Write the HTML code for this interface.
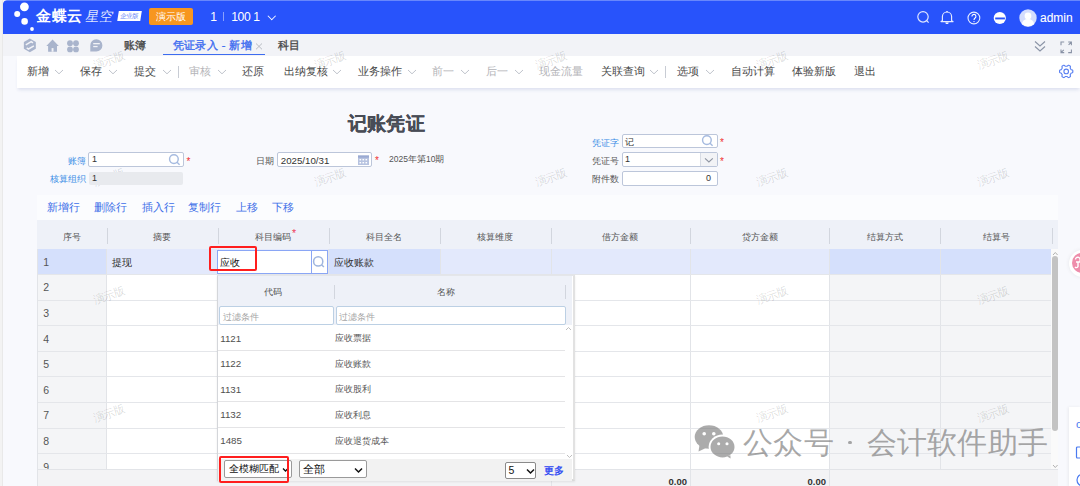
<!DOCTYPE html>
<html><head><meta charset="utf-8">
<style>
*{box-sizing:border-box;margin:0;padding:0}
html,body{width:1080px;height:486px;overflow:hidden;background:#f8f9fd;font-family:"Liberation Sans",sans-serif;color:#333}
.a{position:absolute;white-space:nowrap}
#top{position:absolute;left:0;top:0;width:1080px;height:33.5px;background:#2853fb}
#tabs{position:absolute;left:0;top:33.5px;width:1080px;height:22px;background:#f2f3f7}
#tool{position:absolute;left:16.7px;top:55.8px;width:1063.3px;height:32px;background:#fff;box-shadow:0 3px 3px -1px rgba(190,198,225,.45)}
.tb{font-size:11px;color:#4a4a4a;top:63.5px}
.tb.g{color:#b4b4b8}
.chev{position:absolute}
.sep{position:absolute;width:1px;height:12px;background:#c8ccd4;top:66px}
.lbl{font-size:9px;color:#555}
.blue{color:#3a8ee6}
.inp{position:absolute;background:#fff;border:1px solid #bcc6da;border-radius:2px}
.star{color:#f03030;font-size:10px}
.lnk{font-size:11.4px;color:#3d6fe8;top:200px}
#tbl{position:absolute;left:37.4px;top:220.2px;width:1020.6px;height:265.8px;overflow:hidden}
.hd{position:absolute;left:0;top:0;width:1020.6px;height:28.7px;background:#eef1f8}
.ht{font-size:9px;color:#555;text-align:center}
.hs{position:absolute;top:8px;width:1px;height:15.5px;background:#d4d8e0}
.row{position:absolute;left:0;width:1020.6px;height:25.6px;border-bottom:1px solid #e4e6ea}
.cell{position:absolute;top:0;height:100%}
.wm{font-size:11.3px;color:rgba(0,0,0,.15);transform:rotate(-18deg);width:36px;text-align:center;line-height:14px}
.dig{font-size:10.5px;color:#555}
</style></head><body>
<div class="a" style="left:0;top:0;width:2.5px;height:486px;background:#f3f3f3;border-right:1px solid #e9e9e9;z-index:50"></div>
<svg class="a" style="left:2.5px;top:0;z-index:50" width="5" height="5"><path d="M0 0 H5 A4.5 4.5 0 0 0 0 5Z" fill="#f3f3f3"/></svg>
<div class="a" style="left:0;top:0;width:1080px;height:1px;background:rgba(255,255,255,.3);z-index:49"></div>
<!-- top bar -->
<div id="top">
  <svg class="a" style="left:0;top:0" width="40" height="34">
    <circle cx="24.4" cy="6.8" r="4.4" fill="#fff"/>
    <circle cx="17.2" cy="14" r="3" fill="#fff"/>
    <circle cx="24.6" cy="21.4" r="3.3" fill="#fff"/>
    <circle cx="32" cy="29" r="1.9" fill="#fff"/>
  </svg>
  <div class="a" style="left:36px;top:7px;font-size:15px;font-weight:bold;color:#fff;letter-spacing:0.5px">金蝶云</div>
  <div class="a" style="left:83.5px;top:8px;font-size:13.5px;color:rgba(255,255,255,.88);transform:skewX(-10deg);transform-origin:0 100%;letter-spacing:0">星空</div>
  <div class="a" style="left:117.8px;top:11.2px;width:22.6px;height:10.4px;background:#fff;transform:skewX(-9deg);color:#5f82f8;font-size:6.3px;line-height:10.4px;text-align:center">企业版</div>
  <div class="a" style="left:149px;top:7.6px;width:43.8px;height:17.7px;background:#f7961f;border-radius:2px;color:#fff;font-size:10px;line-height:17.7px;text-align:center">演示版</div>
  <div class="a" style="left:210.3px;top:9.5px;font-size:12.2px;color:#fff">1</div>
  <div class="a" style="left:223px;top:12px;width:1px;height:9px;background:rgba(255,255,255,.45)"></div>
  <div class="a" style="left:231.3px;top:9.5px;font-size:12.2px;letter-spacing:-0.45px;color:#fff">100 1</div>
  <div class="a" style="left:269px;top:13px;width:5.5px;height:5.5px;border-right:1.2px solid #fff;border-bottom:1.2px solid #fff;transform:rotate(45deg)"></div>
  <!-- right icons -->
  <svg class="a" style="left:915px;top:9px" width="18" height="18"><circle cx="8" cy="7.85" r="5.2" fill="none" stroke="#dfe6ff" stroke-width="1.2"/><line x1="11.7" y1="11.6" x2="13.6" y2="13.6" stroke="#dfe6ff" stroke-width="1.3"/></svg>
  <svg class="a" style="left:939px;top:10px" width="16" height="16"><path d="M3.4 10.7 V6.6 a4.6 4.6 0 0 1 9.2 0 V10.7 L14 11.6 H2 Z" fill="none" stroke="#e6ecff" stroke-width="1.15" stroke-linejoin="round"/><path d="M6.3 12.6 h3.4 a1.7 1.5 0 0 1 -3.4 0z" fill="#fff"/><line x1="8" y1="0.9" x2="8" y2="2.2" stroke="#fff" stroke-width="1.2"/></svg>
  <svg class="a" style="left:966px;top:10px" width="16" height="16"><circle cx="7.9" cy="8" r="5.9" fill="none" stroke="#e6ecff" stroke-width="1.1"/><path d="M5.9 6.4 a2 2 0 1 1 3.2 1.6 c-0.8 0.6 -1.1 0.9 -1.1 1.9" fill="none" stroke="#fff" stroke-width="1.1"/><circle cx="8" cy="11.6" r="0.7" fill="#fff"/></svg>
  <svg class="a" style="left:992px;top:10px" width="16" height="16"><circle cx="7.8" cy="8" r="6.1" fill="#fff"/><rect x="3.2" y="7.5" width="9.7" height="1.9" fill="#2853fb"/></svg>
  <svg class="a" style="left:1019px;top:8.5px" width="18" height="18"><circle cx="9" cy="9" r="8.7" fill="#d4ddfd"/><circle cx="9" cy="7" r="3.4" fill="#fff"/><path d="M3 15 a6 5 0 0 1 12 0 a8.7 8.7 0 0 1 -12 0z" fill="#fff"/></svg>
  <div class="a" style="left:1040px;top:10.5px;font-size:12px;color:#fff;-webkit-text-stroke:0.1px #fff">admin</div>
</div>
<!-- tabs bar -->
<div id="tabs">
  <svg class="a" style="left:22px;top:3px" width="90" height="18">
<path d="M7.85 1.45 L13.83 4.90 L13.83 11.80 L7.85 15.25 L1.87 11.80 L1.87 4.90Z" fill="#a9b4cc"/>
<path d="M3.80 7.80 L9.20 4.70 L11.00 5.90 M4.70 10.80 L6.50 12.00 L11.90 8.90" stroke="#f2f3f7" stroke-width="1.5" fill="none"/>
<path d="M24.30 9.10 L30.55 2.50 L36.80 9.10 H35.00 V14.70 H26.10 V9.10Z" fill="#a9b4cc"/>
<rect x="29.6" y="11.100000000000001" width="1.9" height="3.6" fill="#f2f3f7"/>
<circle cx="48" cy="6.200000000000003" r="2.9" fill="#a9b4cc"/><circle cx="54" cy="6.200000000000003" r="2.9" fill="#a9b4cc"/>
<circle cx="48" cy="12.399999999999999" r="2.9" fill="#a9b4cc"/><circle cx="54" cy="12.399999999999999" r="2.9" fill="#a9b4cc"/>
<path d="M74.30 2.30 A6.1 6.1 0 1 1 74.30 14.50 H68.30 V8.40 A6 6 0 0 1 74.30 2.30Z" fill="#a9b4cc"/>
<rect x="71.2" y="6.0" width="6.6" height="1.3" fill="#f2f3f7"/><rect x="71.2" y="8.899999999999999" width="4.4" height="1.3" fill="#f2f3f7"/>
</svg>
  <div class="a" style="left:123.5px;top:4.5px;font-size:11px;color:#484848;-webkit-text-stroke:0.35px #484848">账簿</div>
  <div class="a" style="left:172.5px;top:4.5px;font-size:11px;color:#3d6cf0;letter-spacing:0.45px;-webkit-text-stroke:0.35px #3d6cf0">凭证录入 - 新增</div>
  <svg class="a" style="left:255px;top:9.5px" width="8" height="7"><path d="M1 0.5 L7 6.3 M7 0.5 L1 6.3" stroke="#b8bcc4" stroke-width="1"/></svg>
  <div class="a" style="left:162.8px;top:20.3px;width:101.8px;height:1.7px;background:#3d6cf0"></div>
  <div class="a" style="left:277.5px;top:4.5px;font-size:11px;color:#484848;-webkit-text-stroke:0.35px #484848">科目</div>
  <svg class="a" style="left:1033px;top:6px" width="14" height="14"><path d="M2 1.5 L7 6 L12 1.5 M2 6.5 L7 11 L12 6.5" stroke="#8a93a6" stroke-width="1.1" fill="none"/></svg>
  <svg class="a" style="left:1059px;top:6.5px" width="15" height="15"><path d="M2 5.2 V2 H5.2 M9.2 2 H12.4 V5.2 M12.4 2 L9.6 4.8 M2 9.4 V12.6 H5.2 M2 12.6 L4.8 9.8 M12.4 9.4 V12.6 H9.2" stroke="#8a93a6" stroke-width="1.1" fill="none"/></svg>
</div>
<!-- toolbar -->
<div id="tool"></div>
<div class="a tb" style="left:26.7px">新增</div><svg class="chev" style="left:54.0px;top:68.5px" width="10" height="6"><path d="M1 1 L5 4.8 L9 1" fill="none" stroke="#c0c4cc" stroke-width="1"/></svg>
<div class="a tb" style="left:80px">保存</div><svg class="chev" style="left:108.0px;top:68.5px" width="10" height="6"><path d="M1 1 L5 4.8 L9 1" fill="none" stroke="#c0c4cc" stroke-width="1"/></svg>
<div class="a tb" style="left:134px">提交</div><svg class="chev" style="left:162.0px;top:68.5px" width="10" height="6"><path d="M1 1 L5 4.8 L9 1" fill="none" stroke="#c0c4cc" stroke-width="1"/></svg>
<div class="sep" style="left:178px"></div>
<div class="a tb g" style="left:189px">审核</div><svg class="chev" style="left:216.5px;top:68.5px" width="10" height="6"><path d="M1 1 L5 4.8 L9 1" fill="none" stroke="#c0c4cc" stroke-width="1"/></svg>
<div class="a tb" style="left:242px">还原</div>
<div class="a tb" style="left:284px">出纳复核</div><svg class="chev" style="left:332.0px;top:68.5px" width="10" height="6"><path d="M1 1 L5 4.8 L9 1" fill="none" stroke="#c0c4cc" stroke-width="1"/></svg>
<div class="a tb" style="left:358px">业务操作</div><svg class="chev" style="left:406.5px;top:68.5px" width="10" height="6"><path d="M1 1 L5 4.8 L9 1" fill="none" stroke="#c0c4cc" stroke-width="1"/></svg>
<div class="a tb g" style="left:431.7px">前一</div><svg class="chev" style="left:460.0px;top:68.5px" width="10" height="6"><path d="M1 1 L5 4.8 L9 1" fill="none" stroke="#c0c4cc" stroke-width="1"/></svg>
<div class="a tb g" style="left:485.7px">后一</div><svg class="chev" style="left:514.0px;top:68.5px" width="10" height="6"><path d="M1 1 L5 4.8 L9 1" fill="none" stroke="#c0c4cc" stroke-width="1"/></svg>
<div class="a tb g" style="left:539px">现金流量</div>
<div class="a tb" style="left:600.7px">关联查询</div><svg class="chev" style="left:649.0px;top:68.5px" width="10" height="6"><path d="M1 1 L5 4.8 L9 1" fill="none" stroke="#c0c4cc" stroke-width="1"/></svg>
<div class="sep" style="left:665px"></div>
<div class="a tb" style="left:676.7px">选项</div><svg class="chev" style="left:705.0px;top:68.5px" width="10" height="6"><path d="M1 1 L5 4.8 L9 1" fill="none" stroke="#c0c4cc" stroke-width="1"/></svg>
<div class="a tb" style="left:731px">自动计算</div>
<div class="a tb" style="left:792.3px">体验新版</div>
<div class="a tb" style="left:854px">退出</div>
<svg class="a" style="left:1058px;top:63px" width="17" height="17"><path d="M12.66 10.97 L12.59 11.09 L12.52 11.20 L12.44 11.32 L12.37 11.43 L12.29 11.54 L12.20 11.64 L12.22 11.83 L12.27 12.07 L12.33 12.32 L12.37 12.57 L12.41 12.83 L12.43 13.09 L12.43 13.35 L12.38 13.57 L12.25 13.68 L12.11 13.78 L11.97 13.88 L11.82 13.98 L11.67 14.07 L11.53 14.16 L11.37 14.24 L11.22 14.33 L11.06 14.40 L10.90 14.48 L10.74 14.54 L10.58 14.61 L10.37 14.54 L10.15 14.41 L9.94 14.26 L9.73 14.10 L9.53 13.93 L9.34 13.76 L9.16 13.60 L9.01 13.49 L8.87 13.51 L8.74 13.52 L8.60 13.53 L8.47 13.54 L8.33 13.55 L8.20 13.55 L8.07 13.55 L7.93 13.54 L7.80 13.53 L7.66 13.52 L7.53 13.51 L7.39 13.49 L7.24 13.60 L7.06 13.76 L6.87 13.93 L6.67 14.10 L6.46 14.26 L6.25 14.41 L6.03 14.54 L5.82 14.61 L5.66 14.54 L5.50 14.48 L5.34 14.40 L5.18 14.33 L5.03 14.24 L4.88 14.16 L4.73 14.07 L4.58 13.98 L4.43 13.88 L4.29 13.78 L4.15 13.68 L4.02 13.57 L3.97 13.35 L3.97 13.09 L3.99 12.83 L4.03 12.57 L4.07 12.32 L4.13 12.07 L4.18 11.83 L4.20 11.64 L4.11 11.54 L4.03 11.43 L3.96 11.32 L3.88 11.20 L3.81 11.09 L3.74 10.98 L3.67 10.86 L3.61 10.74 L3.55 10.62 L3.50 10.49 L3.44 10.37 L3.39 10.25 L3.22 10.16 L2.99 10.09 L2.75 10.02 L2.50 9.93 L2.26 9.83 L2.02 9.71 L1.80 9.59 L1.63 9.44 L1.61 9.27 L1.59 9.10 L1.57 8.92 L1.56 8.75 L1.55 8.57 L1.55 8.40 L1.55 8.23 L1.56 8.05 L1.57 7.88 L1.59 7.70 L1.61 7.53 L1.63 7.36 L1.80 7.21 L2.02 7.09 L2.26 6.97 L2.50 6.87 L2.75 6.78 L2.99 6.71 L3.22 6.64 L3.39 6.55 L3.44 6.43 L3.50 6.31 L3.55 6.18 L3.61 6.06 L3.67 5.94 L3.74 5.83 L3.81 5.71 L3.88 5.60 L3.96 5.48 L4.03 5.37 L4.11 5.26 L4.20 5.16 L4.18 4.97 L4.13 4.73 L4.07 4.48 L4.03 4.23 L3.99 3.97 L3.97 3.71 L3.97 3.45 L4.02 3.23 L4.15 3.12 L4.29 3.02 L4.43 2.92 L4.58 2.82 L4.73 2.73 L4.87 2.64 L5.03 2.56 L5.18 2.47 L5.34 2.40 L5.50 2.32 L5.66 2.26 L5.82 2.19 L6.03 2.26 L6.25 2.39 L6.46 2.54 L6.67 2.70 L6.87 2.87 L7.06 3.04 L7.24 3.20 L7.39 3.31 L7.53 3.29 L7.66 3.28 L7.80 3.27 L7.93 3.26 L8.07 3.25 L8.20 3.25 L8.33 3.25 L8.47 3.26 L8.60 3.27 L8.74 3.28 L8.87 3.29 L9.01 3.31 L9.16 3.20 L9.34 3.04 L9.53 2.87 L9.73 2.70 L9.94 2.54 L10.15 2.39 L10.37 2.26 L10.58 2.19 L10.74 2.26 L10.90 2.32 L11.06 2.40 L11.22 2.47 L11.37 2.56 L11.53 2.64 L11.67 2.73 L11.82 2.82 L11.97 2.92 L12.11 3.02 L12.25 3.12 L12.38 3.23 L12.43 3.45 L12.43 3.71 L12.41 3.97 L12.37 4.23 L12.33 4.48 L12.27 4.73 L12.22 4.97 L12.20 5.16 L12.29 5.26 L12.37 5.37 L12.44 5.48 L12.52 5.60 L12.59 5.71 L12.66 5.83 L12.73 5.94 L12.79 6.06 L12.85 6.18 L12.90 6.31 L12.96 6.43 L13.01 6.55 L13.18 6.64 L13.41 6.71 L13.65 6.78 L13.90 6.87 L14.14 6.97 L14.38 7.09 L14.60 7.21 L14.77 7.36 L14.79 7.53 L14.81 7.70 L14.83 7.88 L14.84 8.05 L14.85 8.23 L14.85 8.40 L14.85 8.57 L14.84 8.75 L14.83 8.92 L14.81 9.10 L14.79 9.27 L14.77 9.44 L14.60 9.59 L14.38 9.71 L14.14 9.83 L13.90 9.93 L13.65 10.02 L13.41 10.09 L13.18 10.16 L13.01 10.25 L12.96 10.37 L12.90 10.49 L12.85 10.62 L12.79 10.74 L12.73 10.86 L12.66 10.97Z" fill="none" stroke="#5a80f2" stroke-width="1.1" stroke-linejoin="round"/><circle cx="8.2" cy="8.4" r="2.3" fill="none" stroke="#5a80f2" stroke-width="1.1"/></svg>

<div style="position:absolute;left:0;top:0;width:0;height:0;z-index:1"><!-- content -->
<div class="a" style="left:348.3px;top:111px;font-size:19px;letter-spacing:0.1px;font-weight:bold;color:#484c56;-webkit-text-stroke:0.2px #484c56">记账凭证</div>
<div class="a lbl blue" style="left:67.5px;top:154.5px">账簿</div>
<div class="inp" style="left:88.1px;top:152.1px;width:95.6px;height:15.4px"></div>
<div class="a" style="left:92px;top:154px;font-size:9px;color:#333">1</div>
<svg class="a" style="left:167px;top:153px" width="15" height="14"><circle cx="6.9" cy="6.1" r="4.35" fill="none" stroke="#a6bbe0" stroke-width="1.45"/><line x1="10" y1="9.3" x2="12.6" y2="11.7" stroke="#a6bbe0" stroke-width="1.5"/></svg>
<div class="a star" style="left:186.5px;top:155.5px">*</div>
<div class="a lbl blue" style="left:49.5px;top:173px">核算组织</div>
<div class="a" style="left:89.2px;top:171.7px;width:93.8px;height:13.6px;background:#e8eaee;border-radius:2px"></div>
<div class="a" style="left:92px;top:172.5px;font-size:9px;color:#333">1</div>

<div class="a lbl" style="left:256px;top:155px">日期</div>
<div class="inp" style="left:277.2px;top:152.2px;width:95.3px;height:15.2px"></div>
<div class="a" style="left:280.8px;top:155px;font-size:9.7px;color:#333">2025/10/31</div>
<svg class="a" style="left:357px;top:154px" width="13" height="12"><rect x="1" y="1.5" width="11" height="9.5" fill="#b7c3e0"/><rect x="1" y="1.5" width="11" height="2.2" fill="#9aaad2"/><g fill="#fff"><rect x="2.5" y="5" width="1.6" height="1.4"/><rect x="5.5" y="5" width="1.6" height="1.4"/><rect x="8.5" y="5" width="1.6" height="1.4"/><rect x="2.5" y="8" width="1.6" height="1.4"/><rect x="5.5" y="8" width="1.6" height="1.4"/><rect x="8.5" y="8" width="1.6" height="1.4"/></g></svg>
<div class="a star" style="left:375px;top:155.0px">*</div>
<div class="a" style="left:389px;top:154px;font-size:8.5px;color:#555">2025年第10期</div>

<div class="a lbl blue" style="left:591.5px;top:136.5px">凭证字</div>
<div class="inp" style="left:622.2px;top:134.3px;width:95.9px;height:14.2px"></div>
<div class="a" style="left:625px;top:135.5px;font-size:9px;color:#333">记</div>
<svg class="a" style="left:700px;top:134px" width="15" height="14"><circle cx="6.9" cy="6.1" r="4.35" fill="none" stroke="#a6bbe0" stroke-width="1.45"/><line x1="10" y1="9.3" x2="12.6" y2="11.7" stroke="#a6bbe0" stroke-width="1.5"/></svg>
<div class="a star" style="left:720px;top:137.0px">*</div>
<div class="a lbl" style="left:591.5px;top:155px">凭证号</div>
<div class="inp" style="left:622.2px;top:152.4px;width:95.9px;height:15px"></div>
<div class="a" style="left:700.2px;top:153.4px;width:16.9px;height:13px;background:#f2f3f6;border-left:1px solid #d8dce4"></div>
<svg class="a" style="left:704.3px;top:157px" width="10" height="7"><path d="M1 1.3 L4.9 5 L8.8 1.3" fill="none" stroke="#8e95a2" stroke-width="1.1"/></svg>
<div class="a" style="left:625px;top:154px;font-size:9px;color:#333">1</div>
<div class="a star" style="left:720px;top:155.5px">*</div>
<div class="a lbl" style="left:591.5px;top:173px">附件数</div>
<div class="inp" style="left:622.2px;top:171px;width:95.9px;height:14.6px"></div>
<div class="a" style="left:706px;top:172.5px;font-size:9px;color:#333">0</div>

</div>
<div class="a" style="left:37.4px;top:195px;width:1020.3px;height:25.2px;background:#fbfcfe"></div>
<div class="a lnk" style="left:47.3px">新增行</div>
<div class="a lnk" style="left:94px">删除行</div>
<div class="a lnk" style="left:141.7px">插入行</div>
<div class="a lnk" style="left:188.3px">复制行</div>
<div class="a lnk" style="left:236px">上移</div>
<div class="a lnk" style="left:271.7px">下移</div>
<div class="a" style="left:37.4px;top:220.2px;width:1020.3px;height:28.7px;background:#eef1f8"></div>
<div class="a ht" style="left:37.4px;width:69.1px;top:230.5px">序号</div>
<div class="a ht" style="left:106.5px;width:111.19999999999999px;top:230.5px">摘要</div>
<div class="a ht" style="left:217.7px;width:110.80000000000001px;top:230.5px">科目编码</div><div class="a" style="left:292px;top:226.5px;font-size:10.5px;color:#f0405a">*</div>
<div class="a ht" style="left:328.5px;width:111.5px;top:230.5px">科目全名</div>
<div class="a ht" style="left:440px;width:110.79999999999995px;top:230.5px">核算维度</div>
<div class="a ht" style="left:550.8px;width:139.20000000000005px;top:230.5px">借方金额</div>
<div class="a ht" style="left:690px;width:139px;top:230.5px">贷方金额</div>
<div class="a ht" style="left:829px;width:111px;top:230.5px">结算方式</div>
<div class="a ht" style="left:940px;width:112px;top:230.5px">结算号</div>
<div class="a" style="left:106.5px;top:228.3px;width:1px;height:15.4px;background:#d2d6de"></div>
<div class="a" style="left:217.7px;top:228.3px;width:1px;height:15.4px;background:#d2d6de"></div>
<div class="a" style="left:328.5px;top:228.3px;width:1px;height:15.4px;background:#d2d6de"></div>
<div class="a" style="left:440px;top:228.3px;width:1px;height:15.4px;background:#d2d6de"></div>
<div class="a" style="left:550.8px;top:228.3px;width:1px;height:15.4px;background:#d2d6de"></div>
<div class="a" style="left:690px;top:228.3px;width:1px;height:15.4px;background:#d2d6de"></div>
<div class="a" style="left:829px;top:228.3px;width:1px;height:15.4px;background:#d2d6de"></div>
<div class="a" style="left:940px;top:228.3px;width:1px;height:15.4px;background:#d2d6de"></div>
<div class="a" style="left:1052px;top:228.3px;width:1px;height:15.4px;background:#d2d6de"></div>
<div class="a" style="left:37.4px;top:248.9px;width:1014px;height:220.29999999999998px;overflow:hidden">
<div class="a" style="left:0.0px;top:0;width:69.1px;height:25.6px;background:#d5e0fc"></div>
<div class="a" style="left:0.0px;top:25.6px;width:69.1px;height:300px;background:#f4f5f7"></div>
<div class="a" style="left:69.1px;top:0;width:111.19999999999999px;height:25.6px;background:#e3e9fc"></div>
<div class="a" style="left:69.1px;top:25.6px;width:111.19999999999999px;height:300px;background:#ffffff"></div>
<div class="a" style="left:180.29999999999998px;top:0;width:110.80000000000004px;height:25.6px;background:#e3e9fc"></div>
<div class="a" style="left:180.29999999999998px;top:25.6px;width:110.80000000000004px;height:300px;background:#ffffff"></div>
<div class="a" style="left:291.1px;top:0;width:111.5px;height:25.6px;background:#d5e0fc"></div>
<div class="a" style="left:291.1px;top:25.6px;width:111.5px;height:300px;background:#f4f5f7"></div>
<div class="a" style="left:402.6px;top:0;width:110.79999999999995px;height:25.6px;background:#e3e9fc"></div>
<div class="a" style="left:402.6px;top:25.6px;width:110.79999999999995px;height:300px;background:#ffffff"></div>
<div class="a" style="left:513.4px;top:0;width:139.20000000000005px;height:25.6px;background:#e3e9fc"></div>
<div class="a" style="left:513.4px;top:25.6px;width:139.20000000000005px;height:300px;background:#ffffff"></div>
<div class="a" style="left:652.6px;top:0;width:139.0px;height:25.6px;background:#e3e9fc"></div>
<div class="a" style="left:652.6px;top:25.6px;width:139.0px;height:300px;background:#ffffff"></div>
<div class="a" style="left:791.6px;top:0;width:111.0px;height:25.6px;background:#d5e0fc"></div>
<div class="a" style="left:791.6px;top:25.6px;width:111.0px;height:300px;background:#f4f5f7"></div>
<div class="a" style="left:902.6px;top:0;width:112.0px;height:25.6px;background:#d5e0fc"></div>
<div class="a" style="left:902.6px;top:25.6px;width:112.0px;height:300px;background:#f4f5f7"></div>
<div class="a" style="left:69.1px;top:0;width:1px;height:300px;background:#e2e4e8"></div>
<div class="a" style="left:180.29999999999998px;top:0;width:1px;height:300px;background:#e2e4e8"></div>
<div class="a" style="left:291.1px;top:0;width:1px;height:300px;background:#e2e4e8"></div>
<div class="a" style="left:402.6px;top:0;width:1px;height:300px;background:#e2e4e8"></div>
<div class="a" style="left:513.4px;top:0;width:1px;height:300px;background:#e2e4e8"></div>
<div class="a" style="left:652.6px;top:0;width:1px;height:300px;background:#e2e4e8"></div>
<div class="a" style="left:791.6px;top:0;width:1px;height:300px;background:#e2e4e8"></div>
<div class="a" style="left:902.6px;top:0;width:1px;height:300px;background:#e2e4e8"></div>
<div class="a" style="left:0;top:25.1px;width:1014px;height:1px;background:#e4e6ea"></div>
<div class="a" style="left:0;top:50.7px;width:1014px;height:1px;background:#e4e6ea"></div>
<div class="a" style="left:0;top:76.30000000000001px;width:1014px;height:1px;background:#e4e6ea"></div>
<div class="a" style="left:0;top:101.9px;width:1014px;height:1px;background:#e4e6ea"></div>
<div class="a" style="left:0;top:127.5px;width:1014px;height:1px;background:#e4e6ea"></div>
<div class="a" style="left:0;top:153.10000000000002px;width:1014px;height:1px;background:#e4e6ea"></div>
<div class="a" style="left:0;top:178.70000000000002px;width:1014px;height:1px;background:#e4e6ea"></div>
<div class="a" style="left:0;top:204.3px;width:1014px;height:1px;background:#e4e6ea"></div>
<div class="a" style="left:0;top:229.9px;width:1014px;height:1px;background:#e4e6ea"></div>
<div class="a dig" style="left:5.8px;top:7.0px">1</div>
<div class="a dig" style="left:5.8px;top:32.6px">2</div>
<div class="a dig" style="left:5.8px;top:58.2px">3</div>
<div class="a dig" style="left:5.8px;top:83.80000000000001px">4</div>
<div class="a dig" style="left:5.8px;top:109.4px">5</div>
<div class="a dig" style="left:5.8px;top:135.0px">6</div>
<div class="a dig" style="left:5.8px;top:160.60000000000002px">7</div>
<div class="a dig" style="left:5.8px;top:186.20000000000002px">8</div>
<div class="a dig" style="left:5.8px;top:211.8px">9</div>
<div class="a" style="left:74.30000000000001px;top:7px;font-size:10px;color:#333">提现</div>
<div class="a" style="left:296.3px;top:7px;font-size:10px;color:#333">应收账款</div>
</div>
<div class="a" style="left:37.4px;top:469.2px;width:1020.3px;height:17px;background:#f3f3f5;border-top:1px solid #e2e4e8"></div>
<div class="a" style="left:550.8px;top:469.2px;width:1px;height:17px;background:#e2e4e8"></div>
<div class="a" style="left:690px;top:469.2px;width:1px;height:17px;background:#e2e4e8"></div>
<div class="a" style="left:829px;top:469.2px;width:1px;height:17px;background:#e2e4e8"></div>
<div class="a" style="left:668.5px;top:476px;font-size:9.5px;font-weight:bold;color:#333">0.00</div>
<div class="a" style="left:807.5px;top:476px;font-size:9.5px;font-weight:bold;color:#333">0.00</div>
<div class="a" style="left:1051px;top:248.9px;width:7px;height:220.3px;background:#fafafa"></div><svg class="a" style="left:1051.5px;top:250.5px" width="7" height="5"><path d="M1 4 L3.3 1.5 L5.6 4" fill="none" stroke="#a8a8a8" stroke-width="0.9"/></svg><svg class="a" style="left:1051.5px;top:463.5px" width="7" height="5"><path d="M1 1 L3.3 3.5 L5.6 1" fill="none" stroke="#a8a8a8" stroke-width="0.9"/></svg>
<div class="a" style="left:1051.6px;top:256px;width:6.2px;height:175px;background:#c3c3c3;border-radius:3px"></div>
<div class="a" style="left:217.2px;top:250.1px;width:111.1px;height:23.6px;background:#fff;border:1px solid #8aa6f5"></div>
<div class="a" style="left:310.6px;top:250.1px;width:1px;height:23.6px;background:#8aa6f5"></div>
<svg class="a" style="left:312px;top:255px" width="14" height="14"><circle cx="6.2" cy="6.4" r="4.6" fill="none" stroke="#9fb5de" stroke-width="1.5"/><line x1="9.5" y1="9.7" x2="11.9" y2="12" stroke="#9fb5de" stroke-width="1.5"/></svg>
<div class="a" style="left:219.8px;top:256px;font-size:10px;color:#222">应收</div>
<div class="a" style="left:37.4px;top:248.9px;width:1px;height:238px;background:#e2e4e8"></div>
<div class="a wm" style="left:91px;top:53px">演示版</div>
<div class="a wm" style="left:312px;top:53px">演示版</div>
<div class="a wm" style="left:533px;top:53px">演示版</div>
<div class="a wm" style="left:754px;top:53px">演示版</div>
<div class="a wm" style="left:975px;top:53px">演示版</div>
<div class="a wm" style="left:91px;top:170px">演示版</div>
<div class="a wm" style="left:312px;top:170px">演示版</div>
<div class="a wm" style="left:533px;top:170px">演示版</div>
<div class="a wm" style="left:754px;top:170px">演示版</div>
<div class="a wm" style="left:975px;top:170px">演示版</div>
<div class="a wm" style="left:91px;top:288px">演示版</div>
<div class="a wm" style="left:312px;top:288px">演示版</div>
<div class="a wm" style="left:533px;top:288px">演示版</div>
<div class="a wm" style="left:754px;top:288px">演示版</div>
<div class="a wm" style="left:975px;top:288px">演示版</div>
<div class="a wm" style="left:91px;top:406px">演示版</div>
<div class="a wm" style="left:312px;top:406px">演示版</div>
<div class="a wm" style="left:533px;top:406px">演示版</div>
<div class="a wm" style="left:754px;top:406px">演示版</div>
<div class="a wm" style="left:975px;top:406px">演示版</div>
<div class="a" style="left:217.2px;top:274.6px;width:357.4px;height:206.8px;background:#fff;border-left:1px solid #d4d6da;border-top:1px solid #e4e6ea;border-right:2px solid #e2e2e2;border-bottom:2px solid #dadada;box-shadow:0 1px 2px rgba(0,0,0,.08)"></div>
<div class="a" style="left:218.2px;top:275.5px;width:354.2px;height:49.2px;background:#eef1f8"></div>
<div class="a ht" style="left:263.5px;top:286px">代码</div>
<div class="a ht" style="left:437px;top:286px">名称</div>
<div class="a" style="left:334.4px;top:284.5px;width:1px;height:14px;background:#d2d6de"></div>
<div class="a" style="left:565.3px;top:284.5px;width:1px;height:14px;background:#d2d6de"></div>
<div class="a" style="left:219.3px;top:306px;width:115.1px;height:18.6px;background:#fff;border:1px solid #bcd0e4;border-radius:2px"></div>
<div class="a" style="left:335.5px;top:306px;width:230px;height:18.6px;background:#fff;border:1px solid #bcd0e4;border-radius:2px"></div>
<div class="a" style="left:222.8px;top:311px;font-size:9px;color:#a4a4a4">过滤条件</div>
<div class="a" style="left:338.8px;top:311px;font-size:9px;color:#a4a4a4">过滤条件</div>
<div class="a" style="left:220.2px;top:332.6px;font-size:9.8px;color:#505050">1121</div>
<div class="a" style="left:335px;top:332.1px;font-size:9px;color:#555">应收票据</div>
<div class="a" style="left:218.2px;top:350.20000000000005px;width:346.5px;height:1px;background:#e4e4e6"></div>
<div class="a" style="left:220.2px;top:358.2px;font-size:9.8px;color:#505050">1122</div>
<div class="a" style="left:335px;top:357.70000000000005px;font-size:9px;color:#555">应收账款</div>
<div class="a" style="left:218.2px;top:375.80000000000007px;width:346.5px;height:1px;background:#e4e4e6"></div>
<div class="a" style="left:220.2px;top:383.8px;font-size:9.8px;color:#505050">1131</div>
<div class="a" style="left:335px;top:383.3px;font-size:9px;color:#555">应收股利</div>
<div class="a" style="left:218.2px;top:401.40000000000003px;width:346.5px;height:1px;background:#e4e4e6"></div>
<div class="a" style="left:220.2px;top:409.4px;font-size:9.8px;color:#505050">1132</div>
<div class="a" style="left:335px;top:408.90000000000003px;font-size:9px;color:#555">应收利息</div>
<div class="a" style="left:218.2px;top:427.00000000000006px;width:346.5px;height:1px;background:#e4e4e6"></div>
<div class="a" style="left:220.2px;top:435.0px;font-size:9.8px;color:#505050">1485</div>
<div class="a" style="left:335px;top:434.5px;font-size:9px;color:#555">应收退货成本</div>
<div class="a" style="left:218.2px;top:452.6px;width:346.5px;height:1px;background:#e4e4e6"></div>
<svg class="a" style="left:565px;top:326px" width="7" height="5"><path d="M1 4 L3.5 1.5 L6 4" fill="none" stroke="#b8b8b8" stroke-width="0.9"/></svg>
<svg class="a" style="left:565.5px;top:454px" width="7" height="5"><path d="M1 1 L3.5 3.5 L6 1" fill="none" stroke="#b8b8b8" stroke-width="0.9"/></svg>
<div class="a" style="left:218.2px;top:459.2px;width:353.6px;height:22px;background:#f2f2f2"></div>
<div class="a" style="left:224.2px;top:460px;width:67.9px;height:17.9px;background:#fff;border:1px solid #9a9a9a;border-radius:2px"></div>
<div class="a" style="left:228.6px;top:463px;font-size:9.8px;color:#111">全模糊匹配</div>
<svg class="a" style="left:282px;top:466.5px" width="7" height="6"><path d="M1 1.5 L3.5 4 L6 1.5" fill="none" stroke="#111" stroke-width="1.3"/></svg>
<div class="a" style="left:299px;top:460px;width:67.7px;height:17.9px;background:#fff;border:1px solid #9a9a9a;border-radius:2px"></div>
<div class="a" style="left:302.5px;top:462.5px;font-size:10.5px;color:#111">全部</div>
<svg class="a" style="left:354px;top:466.5px" width="9" height="7"><path d="M1 1.5 L4.5 5 L8 1.5" fill="none" stroke="#111" stroke-width="1.5"/></svg>
<div class="a" style="left:505.3px;top:462.2px;width:30.6px;height:16.4px;background:#fff;border:1px solid #8a8a8a;border-radius:2px"></div>
<div class="a" style="left:508.5px;top:463.5px;font-size:10.5px;color:#111">5</div>
<svg class="a" style="left:525.5px;top:467.5px" width="9" height="7"><path d="M1 1.5 L4.5 5 L8 1.5" fill="none" stroke="#111" stroke-width="1.5"/></svg>
<div class="a" style="left:543.5px;top:463.5px;font-size:10px;color:#1f3ef2;-webkit-text-stroke:0.3px #1f3ef2">更多</div>
<div class="a" style="left:208.8px;top:246.2px;width:48.2px;height:24.7px;border:2px solid #ff1e1e;border-radius:2px"></div>
<div class="a" style="left:219px;top:455.6px;width:69.7px;height:27.4px;border:2px solid #ff1e1e;border-radius:2px"></div>
<div class="a" style="left:1068.8px;top:406.7px;width:12px;height:80px;background:#fff;box-shadow:-1px 0 3px rgba(0,0,0,.06)"></div>
<div class="a" style="left:1068.6px;top:249.6px;width:27px;height:27px;border-radius:50%;background:#fff;box-shadow:0 0 4px rgba(0,0,0,.08)"></div><svg class="a" style="left:1068px;top:248px" width="12" height="30"><circle cx="14" cy="14.9" r="10" fill="#ee8dab"/><path d="M7.5 11.5 a2.3 2.3 0 1 1 4.6 0 v2 M8 14 h4.1 M10 14 v4.5 a1.8 1.8 0 0 1 -3 0.5" stroke="#fff" stroke-width="1.4" fill="none"/></svg>
<div class="a" style="left:1076px;top:418px;font-size:11px;color:#4a7af0">c</div>
<svg class="a" style="left:1075px;top:446px" width="6" height="14"><rect x="1.5" y="1" width="7" height="11" rx="1" fill="none" stroke="#4a7af0" stroke-width="1.2"/></svg>
<svg class="a" style="left:1075px;top:473px" width="6" height="14"><circle cx="8" cy="7" r="6" fill="none" stroke="#4a7af0" stroke-width="1.2"/></svg>
<svg class="a" style="left:692px;top:422px" width="46" height="40">
<defs><mask id="wm1"><rect width="46" height="40" fill="#fff"/><ellipse cx="30.5" cy="24.9" rx="13.9" ry="12.3" fill="#000"/></mask></defs>
<g fill="#707070" opacity=".58">
<g mask="url(#wm1)"><ellipse cx="17" cy="15" rx="14.3" ry="11.7"/><path d="M7.5 23 L6.5 29.5 L15 25.5Z"/></g>
<path d="M30.5 14.4 A12 10.5 0 1 1 30.5 35.4 A12 10.5 0 1 1 30.5 14.4Z M35.2 34.6 L38.6 36.6 L38.4 33.2Z"/>
</g>
<circle cx="12.2" cy="11.8" r="1.8" fill="#fff"/><circle cx="21.8" cy="11.8" r="1.8" fill="#fff"/>
<circle cx="26.7" cy="21.8" r="1.55" fill="#fff"/><circle cx="35" cy="21.8" r="1.55" fill="#fff"/>
</svg>
<div class="a" style="left:743px;top:423px;font-size:30px;color:rgba(110,110,110,.6);letter-spacing:0.3px">公众号</div><div class="a" style="left:847.8px;top:440.5px;width:3.8px;height:3.8px;border-radius:50%;background:rgba(110,110,110,.6)"></div><div class="a" style="left:866.5px;top:423px;font-size:30px;color:rgba(110,110,110,.6);letter-spacing:0.3px">会计软件助手</div>
</body></html>
